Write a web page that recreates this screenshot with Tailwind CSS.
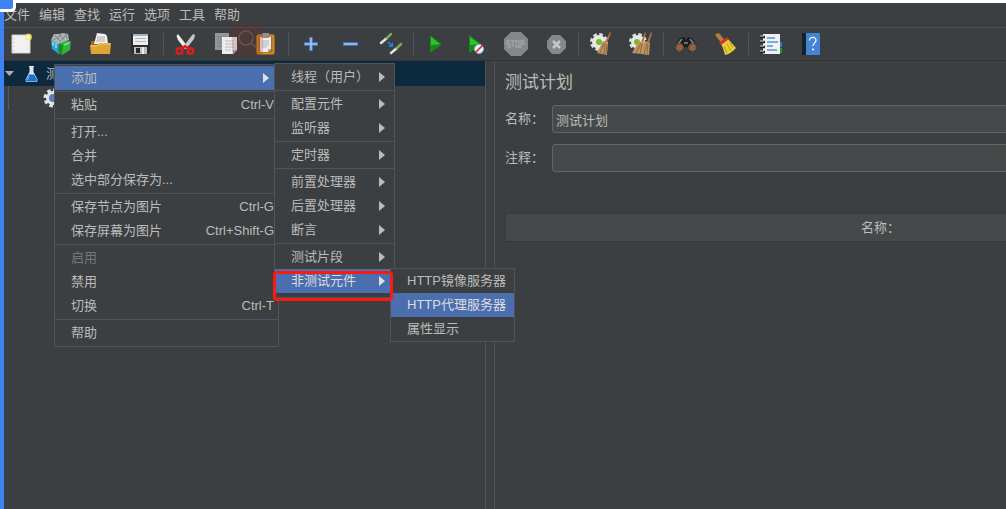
<!DOCTYPE html>
<html lang="zh-CN">
<head>
<meta charset="utf-8">
<title>测试计划</title>
<script src="https://cdn.jsdelivr.net/npm/@tailwindcss/browser@4"></script>
</head>
<body class="bg-[#3c3f41] font-['Liberation_Sans','Noto_Sans_CJK_SC',sans-serif] text-[13px] leading-6 text-[#bbbbbb]">
<div class="relative flex h-screen flex-col overflow-hidden border-t-3 border-l-4 border-t-white border-l-[#3f82f2]">

  <!-- Menu bar -->
  <nav class="flex shrink-0 gap-[9px] border-b border-[#4d5052]">
    <button>文件</button><button>编辑</button><button>查找</button><button>运行</button><button>选项</button><button>工具</button><button>帮助</button>
  </nav>

  <!-- Toolbar -->
  <div class="flex h-[33px] shrink-0 items-center border-b border-[#323537] pl-[5px]" role="toolbar" aria-label="工具栏">
    <div class="flex gap-4">
      <button aria-label="新建"><svg class="size-6" viewBox="0 0 24 24"><path d="M3 3h18v18H3z" fill="#f1f1ef"/><path d="M3 3h18v18H3z" fill="none" stroke="#d2d2d0"/><path d="M5 6v1m0 3v1m0 3v1m0 3v1" stroke="#bbb"/><circle cx="19.500" cy="5" r="3.500" fill="#f5ea5a" opacity=".75"/><circle cx="19.500" cy="5" r="1.500" fill="#fffde0"/></svg></button>
      <button aria-label="模板"><svg class="size-6" viewBox="0 0 24 24"><path d="M2 8l8 3v11l-7-5z" fill="#2aa5d0"/><path d="M10 11l4-3v12l-4 2z" fill="#1878a0"/><path d="M11 11l5-2 6 0-1 9-8 5-3-2z" fill="#32b53c"/><path d="M10 12l4 1-1 10-4-4z" fill="#1b8928"/><path d="M2 8l3-6 5 0 4-1 5 1 1 6-6 2-5 2z" fill="#aab4b7"/><path d="M6 3l3 4 2-5 3 5 3-5 1 5M4 8l4-2 3 3 4-3" fill="none" stroke="#7b898d"/><path d="M4 10v4m3-3v5" stroke="#8adcf1" stroke-width="1.500"/><path d="M15 13l5-2" stroke="#86e58b" stroke-width="1.500"/></svg></button>
      <button aria-label="打开"><svg class="size-6" viewBox="0 0 24 24"><path d="M2 9h5l2 2h12v10H2z" fill="#a96a12"/><path d="M8 1l8 1 2 2 1 8H5z" fill="#f4f4f4"/><path d="M8 5h8m-8 2h8m-9 2h9" stroke="#aaa"/><path d="M1 13h7l2-2h12l-1 11H2z" fill="#dda536"/><path d="M2 14h6l2-2h11" fill="none" stroke="#f2cc6e"/></svg></button>
      <button aria-label="保存"><svg class="size-6" viewBox="0 0 24 24"><path d="M2 2h19v20H4l-2-2z" fill="#2b2d2f"/><path d="M4 2h15v11H4z" fill="#eeeeef"/><path d="M4 2h15v2H4z" fill="#9bb4c8"/><path d="M6 6.500h11M6 9.500h11" stroke="#b5b5b5"/><path d="M5 15h13v7H5z" fill="#b9bcbd"/><path d="M7 16h4v5H7z" fill="#25282a"/><path d="M13 15h2v7h-2z" fill="#eee"/></svg></button>
    </div>
    <span class="mx-[10px] h-[22px] w-px bg-[#515456]"></span>
    <div class="flex gap-4">
      <button aria-label="剪切"><svg class="size-6" viewBox="0 0 24 24"><path d="M19 2l2 1-1 4-8 10-3-2z" fill="#c4c8ca"/><path d="M4 2L2.500 4 4 8l7 9 3-2z" fill="#ededed"/><g fill="none" stroke="#db1f1f" stroke-width="2.600"><circle cx="5.500" cy="19" r="2.800"/><circle cx="16.500" cy="19" r="2.800"/><path d="M7 17l4-3 4 3"/></g></svg></button>
      <button aria-label="复制"><svg class="size-6" viewBox="0 0 24 24"><path d="M1 1h14v17H1z" fill="#949697"/><path d="M3 5h10M3 8h10M3 11h10M3 14h7" stroke="#777a7b"/><path d="M8 5h15v13l-4 4H8z" fill="#ededed"/><path d="M11 9h9m-9 3h9m-9 3h9m-9 3h6" stroke="#bdbdbd"/><path d="M23 18h-4v4z" fill="#aaa"/></svg></button>
      <button aria-label="粘贴"><svg class="size-6" viewBox="0 0 24 24"><rect x="3.500" y="3.500" width="16" height="18" rx="1" fill="#a96f1d" stroke="#d58c25" stroke-width="2"/><path d="M6 5h11v12l-3 3H6z" fill="#eee"/><path d="M8 1h7v5H8z" fill="#969081"/><path d="M8 9h7m-7 2h7m-7 2h7m-7 2h5" stroke="#b3b3b3"/><path d="M17 17h-3v3z" fill="#aaa"/></svg></button>
    </div>
    <span class="mx-[10px] h-[22px] w-px bg-[#515456]"></span>
    <div class="flex gap-4">
      <button aria-label="展开"><svg class="size-6" viewBox="0 0 24 24"><path d="M12 5v14M5 12h14" stroke="#4d83cf" stroke-width="3.500"/><path d="M12 6v12M6 12h12" stroke="#a5c9f5" stroke-width="1.500"/></svg></button>
      <button aria-label="折叠"><svg class="size-6" viewBox="0 0 24 24"><path d="M4 12h15" stroke="#4d83cf" stroke-width="3.500"/><path d="M5 12h13" stroke="#a5c9f5" stroke-width="1.500"/></svg></button>
      <button aria-label="切换"><svg class="size-6" viewBox="0 0 24 24"><g stroke-linecap="round" stroke-width="2.500"><path d="M2 11l6-5" stroke="#e1e3df"/><path d="M8 6l4-4" stroke="#75aa59"/><path d="M12 21l6-5" stroke="#e1e3df"/><path d="M18 16l4-4" stroke="#75aa59"/></g><path d="M9 10l3 3" stroke="#2b7de2" stroke-width="1.600"/><path d="M14 10v5H9z" fill="#2b7de2"/></svg></button>
    </div>
    <span class="mx-[10px] h-[22px] w-px bg-[#515456]"></span>
    <div class="flex gap-4">
      <button aria-label="启动"><svg class="size-6" viewBox="0 0 24 24"><path d="M6 3l12 9.500L6 21z" fill="#148c18"/><path d="M7 5l9 7-9 1z" fill="#30c234"/></svg></button>
      <button aria-label="不停顿启动"><svg class="size-6" viewBox="0 0 24 24"><path d="M5 3l13 9.500L5 21z" fill="#148c18"/><path d="M6 5l9 7-9 1z" fill="#30c234"/><circle cx="15" cy="17" r="4.500" fill="#e9eff6" stroke="#8eaed2"/><path d="M11.500 20.500l7-7" stroke="#dc2a27" stroke-width="1.700"/></svg></button>
      <button aria-label="停止"><svg class="size-6" viewBox="0 0 24 24"><path d="M7 0h10l7 7v10l-7 7H7l-7-7V7z" fill="#858788"/><g fill="none" stroke="#a2a4a5" stroke-width="1.300"><path d="M6 9H3v3h3v3H3M7 9h4M9 9v6M12 9h3v6h-3zM17 16V9h3v3h-3"/></g></svg></button>
      <button aria-label="关闭"><svg class="size-6" viewBox="0 0 24 24"><path d="M8 3h8l6 6v7l-6 6H8l-5-6V9z" fill="#85888a"/><path d="M9 9l7 7m0-7l-7 7" stroke="#c5c7c8" stroke-width="2.500"/></svg></button>
    </div>
    <span class="mx-[10px] h-[22px] w-px bg-[#515456]"></span>
    <div class="flex gap-4">
      <button aria-label="清除"><svg class="size-6" viewBox="0 0 24 24"><circle cx="10" cy="10" r="7.500" fill="none" stroke="#d9dcdc" stroke-width="3" stroke-dasharray="3.500 2.400"/><circle cx="10" cy="10" r="7" fill="#e5e8e7"/><circle cx="10" cy="10" r="3" fill="#76bd25"/><path d="M21 0l1 1-4 10-2-1z" fill="#ad7740"/><path d="M14 9l5 2-1 12-10-2z" fill="#bd9363"/><path d="M15 11l-4 10m5-9l-1 10m3-10l-1 10" stroke="#94693c"/></svg></button>
      <button aria-label="清除全部"><svg class="size-6" viewBox="0 0 24 24"><circle cx="9" cy="10" r="7.500" fill="none" stroke="#d9dcdc" stroke-width="3" stroke-dasharray="3.500 2.400"/><circle cx="9" cy="10" r="7" fill="#e5e8e7"/><circle cx="8" cy="10" r="3" fill="#76bd25"/><path d="M16 0l1 1-3 10-2-1zM22 0l1 1-3 10-2-1z" fill="#ad7740"/><path d="M10 9l4 2 2-2 5 2-1 12-8-1-9-1z" fill="#bd9363"/><path d="M12 11L7 21m6-9l-2 10m7-11l-3 11m4-10l-1 10" stroke="#94693c"/></svg></button>
    </div>
    <span class="mx-[10px] h-[22px] w-px bg-[#515456]"></span>
    <div class="flex gap-4">
      <button aria-label="查找"><svg class="size-6" viewBox="0 0 24 24"><path d="M1 14l5-8 4-1 2 3 2-3 4 1 5 8v4l-3 2h-4l-3-5h-2l-3 5H4l-3-2z" fill="#1c1d1e"/><path d="M8 7l-4 5m12-5l4 5M10 11h4" stroke="#85888a" stroke-width="1.500"/><circle cx="5.500" cy="15.500" r="3.700" fill="#a85c2b" stroke="#55585a" stroke-width="1.400"/><circle cx="18.500" cy="15.500" r="3.700" fill="#a85c2b" stroke="#55585a" stroke-width="1.400"/></svg></button>
      <button aria-label="重置查找"><svg class="size-6" viewBox="0 0 24 24"><path d="M1 3l3-2 2 1 5 7-3 3z" fill="#b77a38"/><path d="M7 12l7-5 8 9c-3 3-6 6-11 7-1-4-2-7-4-11z" fill="#e9cd36"/><path d="M5 11l8-6 2 2-8 6z" fill="#d6302a"/><path d="M10 14l3 7m0-9l4 7m-1-8l3 5" stroke="#b99d1d"/></svg></button>
    </div>
    <span class="mx-[10px] h-[22px] w-px bg-[#515456]"></span>
    <div class="flex gap-4">
      <button aria-label="函数助手"><svg class="size-6" viewBox="0 0 24 24"><path d="M4 2h17v20H4z" fill="#f0f1f2"/><path d="M8 6h8M8 10h11M8 14h6M8 18h10" stroke="#5a93d6" stroke-width="1.500"/><path d="M1 5h5m-5 5h5m-5 5h5m-5 5h5" stroke="#242628" stroke-width="2.500"/><path d="M1 4h4m-4 5h4m-4 5h4m-4 5h4" stroke="#cfd1d2"/><path d="M21 10h2v5h-2z" fill="#2676d2"/><path d="M21 16h2v5h-2z" fill="#189c24"/></svg></button>
      <button aria-label="帮助"><svg class="size-6" viewBox="0 0 24 24"><path d="M3 1h18v22H3z" fill="#4384d5"/><path d="M3 1h4v22H3z" fill="#17202b"/><path d="M10.500 8.500c0-4.500 7-4 6.500 0-.500 2.500-3 3-3 5.500" fill="none" stroke="#eef4fb" stroke-width="1.300"/><circle cx="14" cy="17.500" r="1.100" fill="#eef4fb"/></svg></button>
    </div>
  </div>

  <!-- Workspace -->
  <main class="flex min-h-0 flex-1">
    <aside class="w-[482px] shrink-0 border-r border-[#505355]" aria-label="测试树">
      <div class="flex h-[25px] items-center bg-[#0d293e]">
        <svg class="h-[10px] w-[11px]" viewBox="0 0 11 10"><path d="M1 2h9L5.500 7z" fill="#adb0b2"/></svg>
        <svg class="ml-[9px] h-[18px] w-4" viewBox="0 0 16 18"><path d="M5 1h5v1H9.500v5l4 7.500-.500 2.500H2l-.500-2.500 4-7.500V2H5z" fill="#dfe8ef"/><path d="M5 9.500h5l3 5-.500 2h-10l-.500-2z" fill="#1c72d1"/><path d="M5 11l-1.500 4" stroke="#7ab8f5"/></svg>
        <span class="ml-[6px] h-6 w-[9px] overflow-hidden">测</span>
      </div>
      <div class="ml-1 flex h-6 items-center border-l border-[#55585a] pl-[34px]">
        <svg class="size-5" viewBox="0 0 20 20"><circle cx="10" cy="10" r="7.500" fill="none" stroke="#e2e5e8" stroke-width="4" stroke-dasharray="3.400 2.490"/><circle cx="10" cy="10" r="5.500" fill="#5b7fb0" stroke="#e2e5e8" stroke-width="3"/></svg>
      </div>
    </aside>

    <section class="ml-2 min-w-0 flex-1 overflow-hidden border-l border-[#505355] pl-[10px]">
      <h1 class="mt-[10px] text-[17px] leading-6">测试计划</h1>
      <form class="mt-[10px] grid grid-cols-[47px_1fr] items-center gap-y-[11px]">
        <label for="name">名称：</label>
        <input id="name" value="测试计划" class="-mr-1 h-7 rounded-[3px] border border-[#646464] bg-[#45494a] px-[3px]">
        <label for="comment">注释：</label>
        <input id="comment" class="-mr-1 h-7 rounded-[3px] border border-[#646464] bg-[#45494a] px-[3px]">
      </form>
      <table class="mt-[41px] w-[calc(100%+250px)] border border-[#36393b]">
        <thead><tr><th class="h-7 border-b border-[#36393b] bg-[#45494a] font-normal">名称：</th></tr></thead>
      </table>
    </section>
  </main>

  <!-- Context menu -->
  <div class="absolute top-[61px] left-[50px] flex w-[225px] flex-col border border-[#515456] bg-[#3c3f41] py-px *:text-left" role="menu">
    <button class="flex items-center justify-between bg-[#4b6eaf] pr-[9px] pl-4">添加<svg class="h-[10px] w-[6px]" viewBox="0 0 6 10"><path d="M0 0l6 5-6 5z" fill="#e0e0e0"/></svg></button>
    <hr class="my-px border-[#515456]">
    <button class="flex justify-between pr-1 pl-4">粘贴<kbd class="font-[inherit] text-[13px]">Ctrl-V</kbd></button>
    <hr class="my-px border-[#515456]">
    <button class="pl-4">打开...</button>
    <button class="pl-4">合并</button>
    <button class="pl-4">选中部分保存为...</button>
    <hr class="my-px border-[#515456]">
    <button class="flex justify-between pr-1 pl-4">保存节点为图片<kbd class="font-[inherit] text-[13px]">Ctrl-G</kbd></button>
    <button class="flex justify-between pr-1 pl-4">保存屏幕为图片<kbd class="font-[inherit] text-[13px]">Ctrl+Shift-G</kbd></button>
    <hr class="my-px border-[#515456]">
    <button class="pl-4 text-[#777777]" disabled>启用</button>
    <button class="pl-4">禁用</button>
    <button class="flex justify-between pr-1 pl-4">切换<kbd class="font-[inherit] text-[13px]">Ctrl-T</kbd></button>
    <hr class="my-px border-[#515456]">
    <button class="pl-4">帮助</button>
  </div>

  <!-- Add submenu -->
  <div class="absolute top-[60px] left-[270px] flex w-[121px] flex-col border border-[#515456] bg-[#3c3f41] pt-px pb-1 *:[button]:flex *:[button]:items-center *:[button]:justify-between *:[button]:pr-[9px] *:[button]:pl-4" role="menu">
    <button>线程（用户）<svg class="h-[10px] w-[6px] shrink-0" viewBox="0 0 6 10"><path d="M0 0l6 5-6 5z" fill="#bbbbbb"/></svg></button>
    <hr class="my-px border-[#515456]">
    <button>配置元件<svg class="h-[10px] w-[6px]" viewBox="0 0 6 10"><path d="M0 0l6 5-6 5z" fill="#bbbbbb"/></svg></button>
    <button>监听器<svg class="h-[10px] w-[6px]" viewBox="0 0 6 10"><path d="M0 0l6 5-6 5z" fill="#bbbbbb"/></svg></button>
    <hr class="my-px border-[#515456]">
    <button>定时器<svg class="h-[10px] w-[6px]" viewBox="0 0 6 10"><path d="M0 0l6 5-6 5z" fill="#bbbbbb"/></svg></button>
    <hr class="my-px border-[#515456]">
    <button>前置处理器<svg class="h-[10px] w-[6px]" viewBox="0 0 6 10"><path d="M0 0l6 5-6 5z" fill="#bbbbbb"/></svg></button>
    <button>后置处理器<svg class="h-[10px] w-[6px]" viewBox="0 0 6 10"><path d="M0 0l6 5-6 5z" fill="#bbbbbb"/></svg></button>
    <button>断言<svg class="h-[10px] w-[6px]" viewBox="0 0 6 10"><path d="M0 0l6 5-6 5z" fill="#bbbbbb"/></svg></button>
    <hr class="my-px border-[#515456]">
    <button>测试片段<svg class="h-[10px] w-[6px]" viewBox="0 0 6 10"><path d="M0 0l6 5-6 5z" fill="#bbbbbb"/></svg></button>
    <button class="bg-[#4b6eaf] text-[#dddddd]">非测试元件<svg class="h-[10px] w-[6px]" viewBox="0 0 6 10"><path d="M0 0l6 5-6 5z" fill="#e0e0e0"/></svg></button>
  </div>

  <!-- Non-test elements submenu -->
  <div class="absolute top-[265px] left-[386px] flex w-[125px] flex-col border border-[#515456] bg-[#3c3f41] *:pl-4 *:text-left *:whitespace-nowrap" role="menu">
    <button>HTTP镜像服务器</button>
    <button class="bg-[#4b6eaf] text-[#dddddd]">HTTP代理服务器</button>
    <button>属性显示</button>
  </div>

  <!-- Highlight frame -->
  <div class="pointer-events-none absolute top-[268px] left-[269px] h-[30px] w-[120px] rounded-[4px] border-3 border-[#fb1a10]"></div>

  <!-- Faint search badge over the toolbar -->
  <svg class="pointer-events-none absolute top-[21px] left-[228px] size-[31px]" viewBox="0 0 31 31"><rect width="31" height="31" rx="3" fill="#8b2020" opacity=".22"/><g fill="none" stroke="#747070" stroke-width="1.500" opacity=".55"><circle cx="14" cy="14" r="7"/><path d="M19 19l6 5"/></g></svg>
</div>

<!-- Selection handle -->
<div class="absolute top-0 left-0 h-3 w-4 rounded-br-[5px] border-r-3 border-b-3 border-white bg-[#3f82f2]"></div>
</body>
</html>
